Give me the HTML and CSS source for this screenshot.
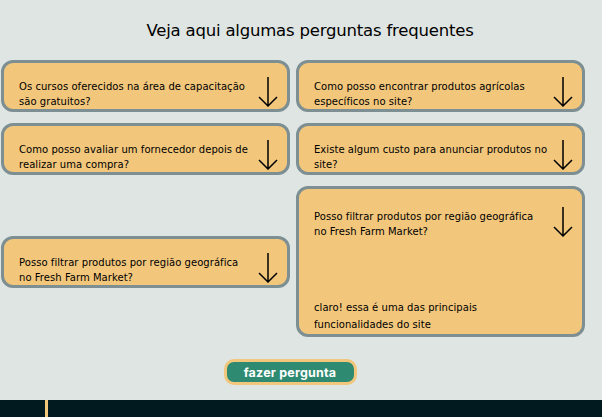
FILE: index.html
```html
<!DOCTYPE html>
<html lang="pt">
<head>
<meta charset="utf-8">
<title>Perguntas frequentes</title>
<link rel="stylesheet" href="styles.css">
</head>
<body>
<main class="faq">
  <h1 class="faq-title">Veja aqui algumas perguntas frequentes</h1>
  <div class="faq-grid">
    <div class="card">
      <div class="card-head">
        <p class="question">Os cursos oferecidos na área de capacitação são gratuitos?</p>
        <svg class="arrow" viewBox="0 0 20 30" width="20" height="30"><path d="M10 0V29M1 20L10 29L19 20" fill="none" stroke="#000" stroke-width="1.5"/></svg>
      </div>
    </div>
    <div class="card">
      <div class="card-head">
        <p class="question">Como posso encontrar produtos agrícolas específicos no site?</p>
        <svg class="arrow" viewBox="0 0 20 30" width="20" height="30"><path d="M10 0V29M1 20L10 29L19 20" fill="none" stroke="#000" stroke-width="1.5"/></svg>
      </div>
    </div>
    <div class="card">
      <div class="card-head">
        <p class="question">Como posso avaliar um fornecedor depois de realizar uma compra?</p>
        <svg class="arrow" viewBox="0 0 20 30" width="20" height="30"><path d="M10 0V29M1 20L10 29L19 20" fill="none" stroke="#000" stroke-width="1.5"/></svg>
      </div>
    </div>
    <div class="card">
      <div class="card-head">
        <p class="question">Existe algum custo para anunciar produtos no site?</p>
        <svg class="arrow" viewBox="0 0 20 30" width="20" height="30"><path d="M10 0V29M1 20L10 29L19 20" fill="none" stroke="#000" stroke-width="1.5"/></svg>
      </div>
    </div>
    <div class="card">
      <div class="card-head">
        <p class="question">Posso filtrar produtos por região geográfica <span class="nowrap">no Fresh Farm Market?</span></p>
        <svg class="arrow" viewBox="0 0 20 30" width="20" height="30"><path d="M10 0V29M1 20L10 29L19 20" fill="none" stroke="#000" stroke-width="1.5"/></svg>
      </div>
    </div>
    <div class="card card-open">
      <div class="card-head">
        <p class="question">Posso filtrar produtos por região geográfica <span class="nowrap">no Fresh Farm Market?</span></p>
        <svg class="arrow" viewBox="0 0 20 30" width="20" height="30"><path d="M10 0V29M1 20L10 29L19 20" fill="none" stroke="#000" stroke-width="1.5"/></svg>
      </div>
      <p class="answer">claro! essa é uma das principais funcionalidades do site</p>
    </div>
  </div>
  <div class="actions">
    <button class="ask-btn" type="button">fazer pergunta</button>
  </div>
</main>
<footer class="footer">
  <span class="footer-bar"></span>
</footer>
</body>
</html>
```

FILE: styles.css
```css
* { box-sizing: border-box; }

html, body {
  margin: 0;
  padding: 0;
}

body {
  background: #dfe5e3;
  font-family: "DejaVu Sans", "Noto Sans", sans-serif;
  color: #000;
  height: 417px;
  overflow: hidden;
  display: flex;
  flex-direction: column;
}

.faq {
  flex: 1;
}

.faq-title {
  margin: 21px 0 0;
  padding-left: 18px;
  text-align: center;
  font-size: 16.5px;
  line-height: 20px;
  font-weight: 400;
  letter-spacing: -0.2px;
}

.faq-grid {
  display: grid;
  grid-template-columns: 289px 289px;
  column-gap: 6px;
  row-gap: 11px;
  align-items: center;
  margin: 19px 0 0 1px;
}

.card {
  background: #f2c77c;
  border: 3px solid #7d8f92;
  border-radius: 12px;
  height: 52px;
}

.card-head {
  display: flex;
  justify-content: space-between;
  align-items: flex-start;
  padding: 14px 9px 0 15px;
}

.question {
  margin: 2px 0 0;
  font-size: 10px;
  line-height: 15px;
  letter-spacing: 0.05px;
  max-width: 237px;
}

.nowrap {
  white-space: nowrap;
}

.arrow {
  flex: none;
  display: block;
}

.card-open {
  height: 151px;
  display: flex;
  flex-direction: column;
}

.card-open .card-head {
  padding-top: 18px;
}

.answer {
  margin: auto 0 1px;
  padding-left: 15px;
  font-size: 10px;
  line-height: 16.5px;
  letter-spacing: 0.05px;
  max-width: 215px;
}

.actions {
  display: flex;
  justify-content: center;
  margin-top: 22px;
  padding-right: 22px;
}

.ask-btn {
  width: 133px;
  height: 26px;
  background: #2e8a70;
  border: 3px solid #f2c77c;
  border-radius: 10px;
  color: #fff;
  font-family: Inter, "Noto Sans", sans-serif;
  font-weight: 700;
  font-size: 12.5px;
  letter-spacing: 0.2px;
  padding: 0;
  cursor: pointer;
}

.footer {
  height: 17px;
  background: #001a1f;
  flex: none;
  padding-left: 45px;
}

.footer-bar {
  display: block;
  width: 2.5px;
  height: 100%;
  background: #f2c77c;
}
```
